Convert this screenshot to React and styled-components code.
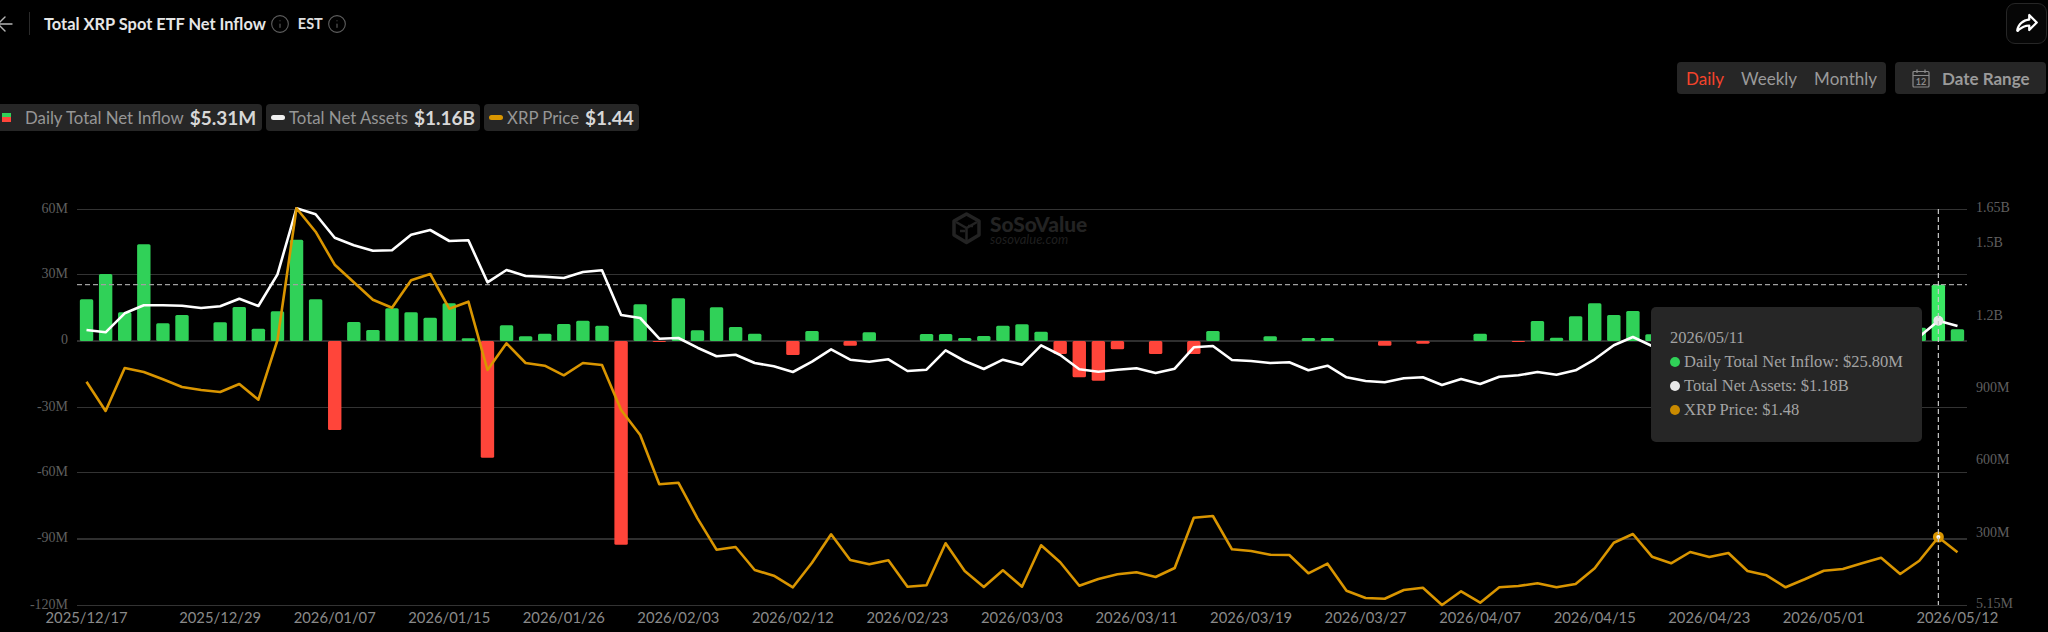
import React from "react";
import styled, { createGlobalStyle } from "styled-components";
import { ArrowLeft, Info } from "lucide-react";
import { PiShareFatBold } from "react-icons/pi";

const GlobalStyle = createGlobalStyle`
  html, body { margin: 0; padding: 0; background: #000; }
  body { width: 2048px; height: 632px; overflow: hidden; font-family: Lato, "Liberation Sans", sans-serif; }
`;

const Page = styled.div`
  width: 2048px;
  height: 632px;
  background: #000;
  overflow: hidden;
  display: flex;
  flex-direction: column;
`;

const Header = styled.header`
  height: 47px;
  display: flex;
  align-items: center;
`;

const BackIcon = styled(ArrowLeft)`
  margin-left: -7px;
  color: #b5b5b5;
  flex: none;
`;

const Divider = styled.span`
  width: 1px;
  height: 23px;
  margin: 0 14px 0 12px;
  background: #2a2a2a;
`;

const Title = styled.h1`
  margin: 0;
  font-size: 16.4px;
  font-weight: 700;
  line-height: 20px;
  color: #e6e6e6;
  white-space: nowrap;
`;

const InfoIcon = styled(Info)`
  color: #5f5f5f;
  flex: none;
  margin-left: ${(p) => p.$gap}px;
`;

const Timezone = styled.span`
  margin-left: 8px;
  font-size: 14.5px;
  font-weight: 700;
  color: #e0e0e0;
`;

const ShareButton = styled.button`
  margin-left: auto;
  margin-right: 1px;
  width: 41px;
  height: 41px;
  padding: 0;
  display: flex;
  align-items: center;
  justify-content: center;
  color: #fff;
  background: #060606;
  border: 1px solid #262626;
  border-radius: 9px;
`;

const Controls = styled.div`
  margin-top: 15px;
  height: 32px;
  display: flex;
  justify-content: flex-end;
  gap: 9px;
  padding-right: 2px;
`;

const Tabs = styled.div`
  display: flex;
  align-items: center;
  gap: 17px;
  padding: 0 9px 0 9px;
  background: #262626;
  border-radius: 4px;
`;

const Tab = styled.span`
  font-size: 17px;
  color: ${(p) => (p.$active ? "#f5432b" : "#9a9a9a")};
`;

const DateRange = styled.button`
  width: 151px;
  padding: 0 0 0 17px;
  display: flex;
  align-items: center;
  gap: 12px;
  font: 700 17px Lato, sans-serif;
  color: #9a9a9a;
  background: #262626;
  border: 0;
  border-radius: 4px;
`;

const Legend = styled.div`
  margin: 10px 0 0 -8px;
  height: 27px;
  display: flex;
  gap: 4px;
`;

const Pill = styled.div`
  width: ${(p) => p.$w}px;
  box-sizing: border-box;
  padding-left: 5px;
  display: flex;
  align-items: center;
  background: #262626;
  border-radius: 4px;
`;

const SplitMarker = styled.span`
  width: 9px;
  height: 9px;
  margin: 0 14px 0 5px;
  background: linear-gradient(#30d158 50%, #ff453a 50%);
`;

const LineMarker = styled.span`
  width: 14px;
  height: 5px;
  margin-right: 4px;
  border-radius: 3px;
  background: ${(p) => p.$color};
`;

const LegendLabel = styled.span`
  font-size: 16.8px;
  color: #969696;
  white-space: nowrap;
`;

const LegendValue = styled.span`
  margin-left: 6px;
  font-size: 19px;
  font-weight: 700;
  color: #d8d8d8;
  white-space: nowrap;
`;

const ChartArea = styled.div`
  position: relative;
  margin-top: 59px;
  height: 442px;
`;

const ChartSvg = styled.svg`
  display: block;
`;

const Tooltip = styled.div`
  position: absolute;
  left: 1651px;
  top: 117px;
  width: 271px;
  height: 135px;
  box-sizing: border-box;
  padding: 19px 19px 0;
  background: #262626;
  border-radius: 5px;
  font: 16.5px "Liberation Serif", serif;
  line-height: 24px;
  color: #a3a3a3;
  white-space: nowrap;
`;

const TooltipRow = styled.div`
  display: flex;
  align-items: center;
  gap: 4px;
`;

const Dot = styled.span`
  width: 10px;
  height: 10px;
  border-radius: 50%;
  background: ${(p) => p.$color};
`;

const GridLine = styled.line`
  stroke: ${(p) => (p.$strong ? "#2f2f2f" : "#333")};
  stroke-width: ${(p) => (p.$strong ? 2 : 1)};
  shape-rendering: crispEdges;
`;

const YLabel = styled.text`
  font: 14px "Liberation Serif", serif;
  fill: #5f5f5f;
  dominant-baseline: middle;
`;

const XLabel = styled.text`
  font: 14.8px Lato, sans-serif;
  fill: #8a8a8a;
  text-anchor: middle;
  dominant-baseline: middle;
`;

const Mark = styled.text`
  font: 900 20.9px Lato, sans-serif;
  fill: #232323;
`;

const MarkSub = styled.text`
  font: italic 13px Lato, sans-serif;
  fill: #1f1f1f;
`;

const LEFT = 77, RIGHT = 1967, ZERO = 341, BAND = (RIGHT - LEFT) / 99;
const cx = (i) => LEFT + BAND * (i + 0.5);

const bars = [41.7,67,28.7,96.7,17.7,26,0,18.7,34,12.3,29.7,101.3,41.7,-89,19,11,32.7,28.7,23.3,37.7,2.7,-116.7,15.7,4.7,7.3,17,20.3,15.3,-203.7,36.7,-1,42.7,10.7,33.7,14,7.3,0,-14,10,0,-4.7,8.7,0,0,7,7,3,5,15.3,16.7,9.3,-13,-36.3,-39.7,-8.3,0,-13,0,-13,10,0,0,4.7,0,3,3,0,0,-4.7,0,-2.7,0,0,7.3,0,-1,20,3.3,24.7,37.7,26,30,6.7,0,0,0,0,0,0,0,0,0,0,0,0,0,13.3,56.3,11.7];

const white = [420,427,370,346,346,347,354,349,326,348,253,55,73,143,166,182,181,134,120,153,151,277,240,258,260,264,246,241,375,384,446,444,473,499,494,519,529,546,515,478,509,515,508,543,539,481,513,537,509,524,466,495,538,545,539,535,549,536,472,468,510,513,519,517,541,527,562,573,577,565,562,585,567,582,560,556,546,554,541,508,466,441,468,480,490,480,470,470,475,480,470,465,460,460,455,450,440,392,408];

const orange = [575,663,534,546,568,591,600,606,582,629,450,55,125,224,277,329,353,271,252,356,335,540,460,519,527,556,519,525,660,735,883,878,985,1079,1071,1140,1157,1192,1118,1033,1110,1123,1111,1190,1186,1060,1143,1191,1141,1190,1066,1117,1187,1167,1153,1147,1161,1134,983,978,1078,1083,1094,1095,1150,1121,1202,1224,1226,1200,1193,1245,1204,1238,1192,1188,1180,1192,1182,1135,1058,1032,1100,1120,1086,1101,1089,1143,1156,1192,1168,1142,1137,1120,1103,1152,1112,1042,1087];

const toPoints = (ys) => ys.map((y, i) => `${cx(i).toFixed(1)},${(190 + y / 3).toFixed(1)}`).join(" ");

const leftTicks = [["60M", 209.5], ["30M", 274.5], ["0", 341], ["-30M", 407.5], ["-60M", 472.5], ["-90M", 539], ["-120M", 605.5]];
const rightTicks = [["1.65B", 209], ["1.5B", 244], ["1.2B", 317], ["900M", 389], ["600M", 461], ["300M", 534], ["5.15M", 605]];
const dates = [[0,"2025/12/17"],[7,"2025/12/29"],[13,"2026/01/07"],[19,"2026/01/15"],[25,"2026/01/26"],[31,"2026/02/03"],[37,"2026/02/12"],[43,"2026/02/23"],[49,"2026/03/03"],[55,"2026/03/11"],[61,"2026/03/19"],[67,"2026/03/27"],[73,"2026/04/07"],[79,"2026/04/15"],[85,"2026/04/23"],[91,"2026/05/01"],[98,"2026/05/12"]];

const CalendarIcon = () => (
  <svg width="18" height="19" viewBox="0 0 18 19" fill="none" stroke="#8c8c8c" strokeWidth="1.2">
    <rect x="1" y="2.5" width="16" height="15.5" rx="1" />
    <path d="M1 6.5h16M5 0.5v3.5M13 0.5v3.5" />
    <text x="9" y="15.5" textAnchor="middle" fontSize="9" fontFamily="Lato, sans-serif" fill="#8c8c8c" stroke="none">12</text>
  </svg>
);

const Watermark = () => (
  <g>
    <path d="M966.5 214 L979 221 V235 L966.5 242.500 L954 235 V221 Z" fill="none" stroke="#232323" strokeWidth="3.500" strokeLinejoin="round" />
    <path d="M956 222 L966.500 228 L977 222 M966.500 228 V241 M960 231 h5 M968 226 h5" fill="none" stroke="#232323" strokeWidth="2.500" />
    <Mark x="990" y="232">SoSoValue</Mark>
    <MarkSub x="990" y="244">sosovalue.com</MarkSub>
  </g>
);

const Chart = () => (
  <ChartSvg width="2048" height="442" viewBox="0 190 2048 442">
    <Watermark />
    {leftTicks.map(([t, y]) => (
      <GridLine key={t} x1={LEFT} x2={RIGHT} y1={y} y2={y} $strong={t === "0" || t === "-90M"} />
    ))}
    {leftTicks.map(([t, y]) => (
      <YLabel key={t} x="68" y={y} textAnchor="end">{t}</YLabel>
    ))}
    {rightTicks.map(([t, y]) => (
      <YLabel key={t} x="1976" y={y}>{t}</YLabel>
    ))}
    {dates.map(([i, d]) => (
      <XLabel key={d} x={cx(i)} y="619">{d}</XLabel>
    ))}
    {bars.map((h, i) =>
      h === 0 ? null : (
        <rect
          key={i}
          x={cx(i) - 6.7}
          width="13.4"
          y={h > 0 ? ZERO - h : ZERO}
          height={Math.abs(h)}
          rx="1.5"
          fill={h > 0 ? (i === 97 ? "#3ae863" : "#30d158") : "#ff453a"}
        />
      )
    )}
    <line x1={LEFT} x2={RIGHT} y1="284.700" y2="284.700" stroke="#a0a0a0" strokeWidth="1.300" strokeDasharray="5 3" />
    <polyline points={toPoints(white)} fill="none" stroke="#fff" strokeWidth="2.600" strokeLinejoin="round" />
    <polyline points={toPoints(orange)} fill="none" stroke="#d99500" strokeWidth="2.600" strokeLinejoin="round" />
    <circle cx={cx(97)} cy="320.700" r="5" fill="#e8e8e8" />
    <circle cx={cx(97)} cy="537" r="5.500" fill="#d99500" />
    <circle cx={cx(97)} cy="537" r="2" fill="#fff" />
    <line x1={cx(97)} x2={cx(97)} y1="209" y2="605" stroke="#c8c8c8" strokeWidth="1.200" strokeDasharray="5 3" />
  </ChartSvg>
);

export default function App() {
  return (
    <Page>
      <GlobalStyle />
      <Header>
        <BackIcon size={24} strokeWidth={1.4} />
        <Divider />
        <Title>Total XRP Spot ETF Net Inflow</Title>
        <InfoIcon size={20} strokeWidth={1.3} $gap={4} />
        <Timezone>EST</Timezone>
        <InfoIcon size={20} strokeWidth={1.3} $gap={4} />
        <ShareButton aria-label="Share">
          <PiShareFatBold size={24} />
        </ShareButton>
      </Header>
      <Controls>
        <Tabs>
          <Tab $active>Daily</Tab>
          <Tab>Weekly</Tab>
          <Tab>Monthly</Tab>
        </Tabs>
        <DateRange>
          <CalendarIcon />
          Date Range
        </DateRange>
      </Controls>
      <Legend>
        <Pill $w={270}>
          <SplitMarker />
          <LegendLabel>Daily Total Net Inflow</LegendLabel>
          <LegendValue>$5.31M</LegendValue>
        </Pill>
        <Pill $w={214}>
          <LineMarker $color="#f0f0f0" />
          <LegendLabel>Total Net Assets</LegendLabel>
          <LegendValue>$1.16B</LegendValue>
        </Pill>
        <Pill $w={155}>
          <LineMarker $color="#d99600" />
          <LegendLabel>XRP Price</LegendLabel>
          <LegendValue>$1.44</LegendValue>
        </Pill>
      </Legend>
      <ChartArea>
        <Chart />
        <Tooltip>
          <div>2026/05/11</div>
          <TooltipRow><Dot $color="#30d158" />Daily Total Net Inflow: $25.80M</TooltipRow>
          <TooltipRow><Dot $color="#e8e8e8" />Total Net Assets: $1.18B</TooltipRow>
          <TooltipRow><Dot $color="#c98a00" />XRP Price: $1.48</TooltipRow>
        </Tooltip>
      </ChartArea>
    </Page>
  );
}
